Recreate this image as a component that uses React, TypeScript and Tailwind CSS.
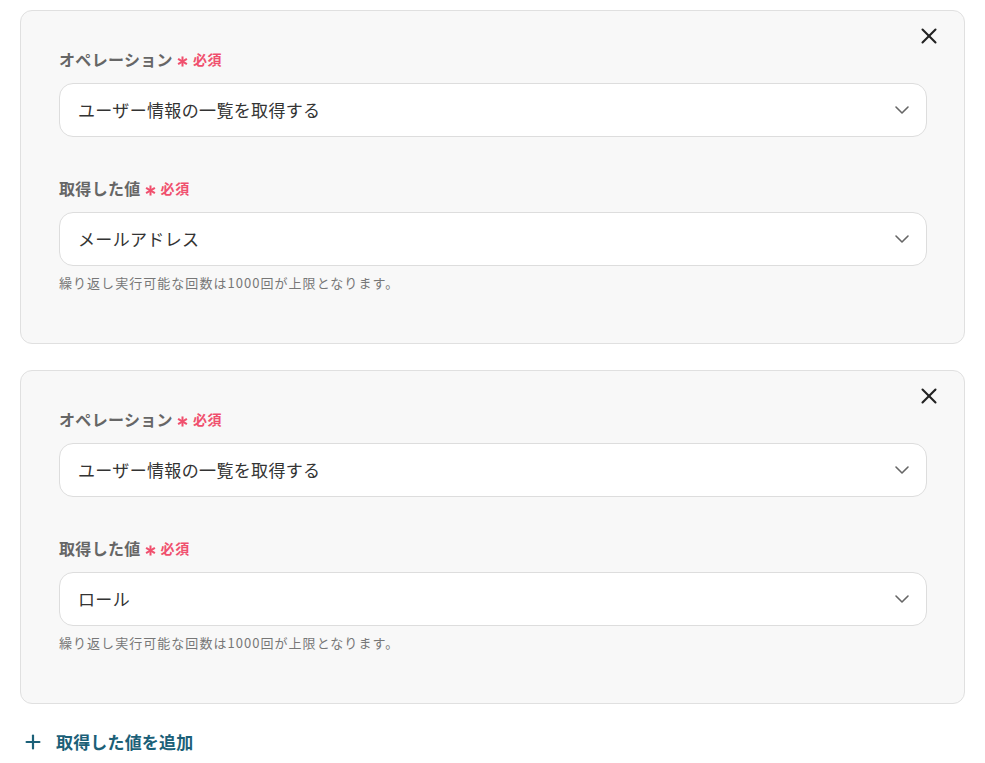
import { X, ChevronDown, Plus } from "lucide-react"

const font = { fontFamily: '"Noto Sans CJK JP", "Noto Sans", sans-serif' }

type Item = { operation: string; value: string }

const items: Item[] = [
  { operation: "ユーザー情報の一覧を取得する", value: "メールアドレス" },
  { operation: "ユーザー情報の一覧を取得する", value: "ロール" },
]

function Asterisk() {
  return (
    <svg width="11" height="11" viewBox="0 0 12 12" className="ml-[4px] mr-[5px] translate-y-[2px] text-[#f0506e]">
      <g stroke="currentColor" strokeWidth="2.2" strokeLinecap="butt">
        <line x1="6" y1="0.5" x2="6" y2="11.5" />
        <line x1="1.2" y1="3.2" x2="10.8" y2="8.8" />
        <line x1="1.2" y1="8.8" x2="10.8" y2="3.2" />
      </g>
    </svg>
  )
}

function Label({ text }: { text: string }) {
  return (
    <div className="flex h-5 items-center text-[16px] font-bold leading-5 tracking-[0.02em] text-[#666666]">
      <span>{text}</span>
      <Asterisk />
      <span className="text-[14px] tracking-[0.05em] text-[#f0506e]">必須</span>
    </div>
  )
}

function Select({ value }: { value: string }) {
  return (
    <div className="flex h-[54px] items-center justify-between rounded-[14px] border border-[#dddddd] bg-white pl-[18px] pr-[12px] text-[17px] tracking-[0.02em] text-[#333333]">
      <span>{value}</span>
      <ChevronDown size={24} strokeWidth={1.6} className="text-[#666666]" />
    </div>
  )
}

export default function App() {
  return (
    <div style={font} className="bg-white px-5 pt-[10px] pb-4">
      <div className="flex flex-col gap-[26px]">
        {items.map((it, i) => (
          <div
            key={i}
            className="relative rounded-xl border border-[#e0e0e0] bg-[#f8f8f8] pl-[38px] pr-[37px] pt-[38px] pb-[51px]"
          >
            <button type="button" className="absolute right-[22px] top-[12px] text-[#222222]">
              <X size={26} strokeWidth={1.9} />
            </button>
            <Label text="オペレーション" />
            <div className="mt-[14px]">
              <Select value={it.operation} />
            </div>
            <div className="mt-[41px]">
              <Label text="取得した値" />
            </div>
            <div className="mt-[14px]">
              <Select value={it.value} />
            </div>
            <p className="mt-[8px] text-[13px] leading-[18px] tracking-[0.08em] text-[#777777]">
              繰り返し実行可能な回数は1000回が上限となります。
            </p>
          </div>
        ))}
      </div>
      <button
        type="button"
        className="mt-[28px] ml-[3px] flex h-5 items-center gap-[12px] text-[17px] font-bold tracking-[0.01em] text-[#1b6078]"
      >
        <Plus size={22} strokeWidth={2.4} className="-ml-[1px]" />
        取得した値を追加
      </button>
    </div>
  )
}
